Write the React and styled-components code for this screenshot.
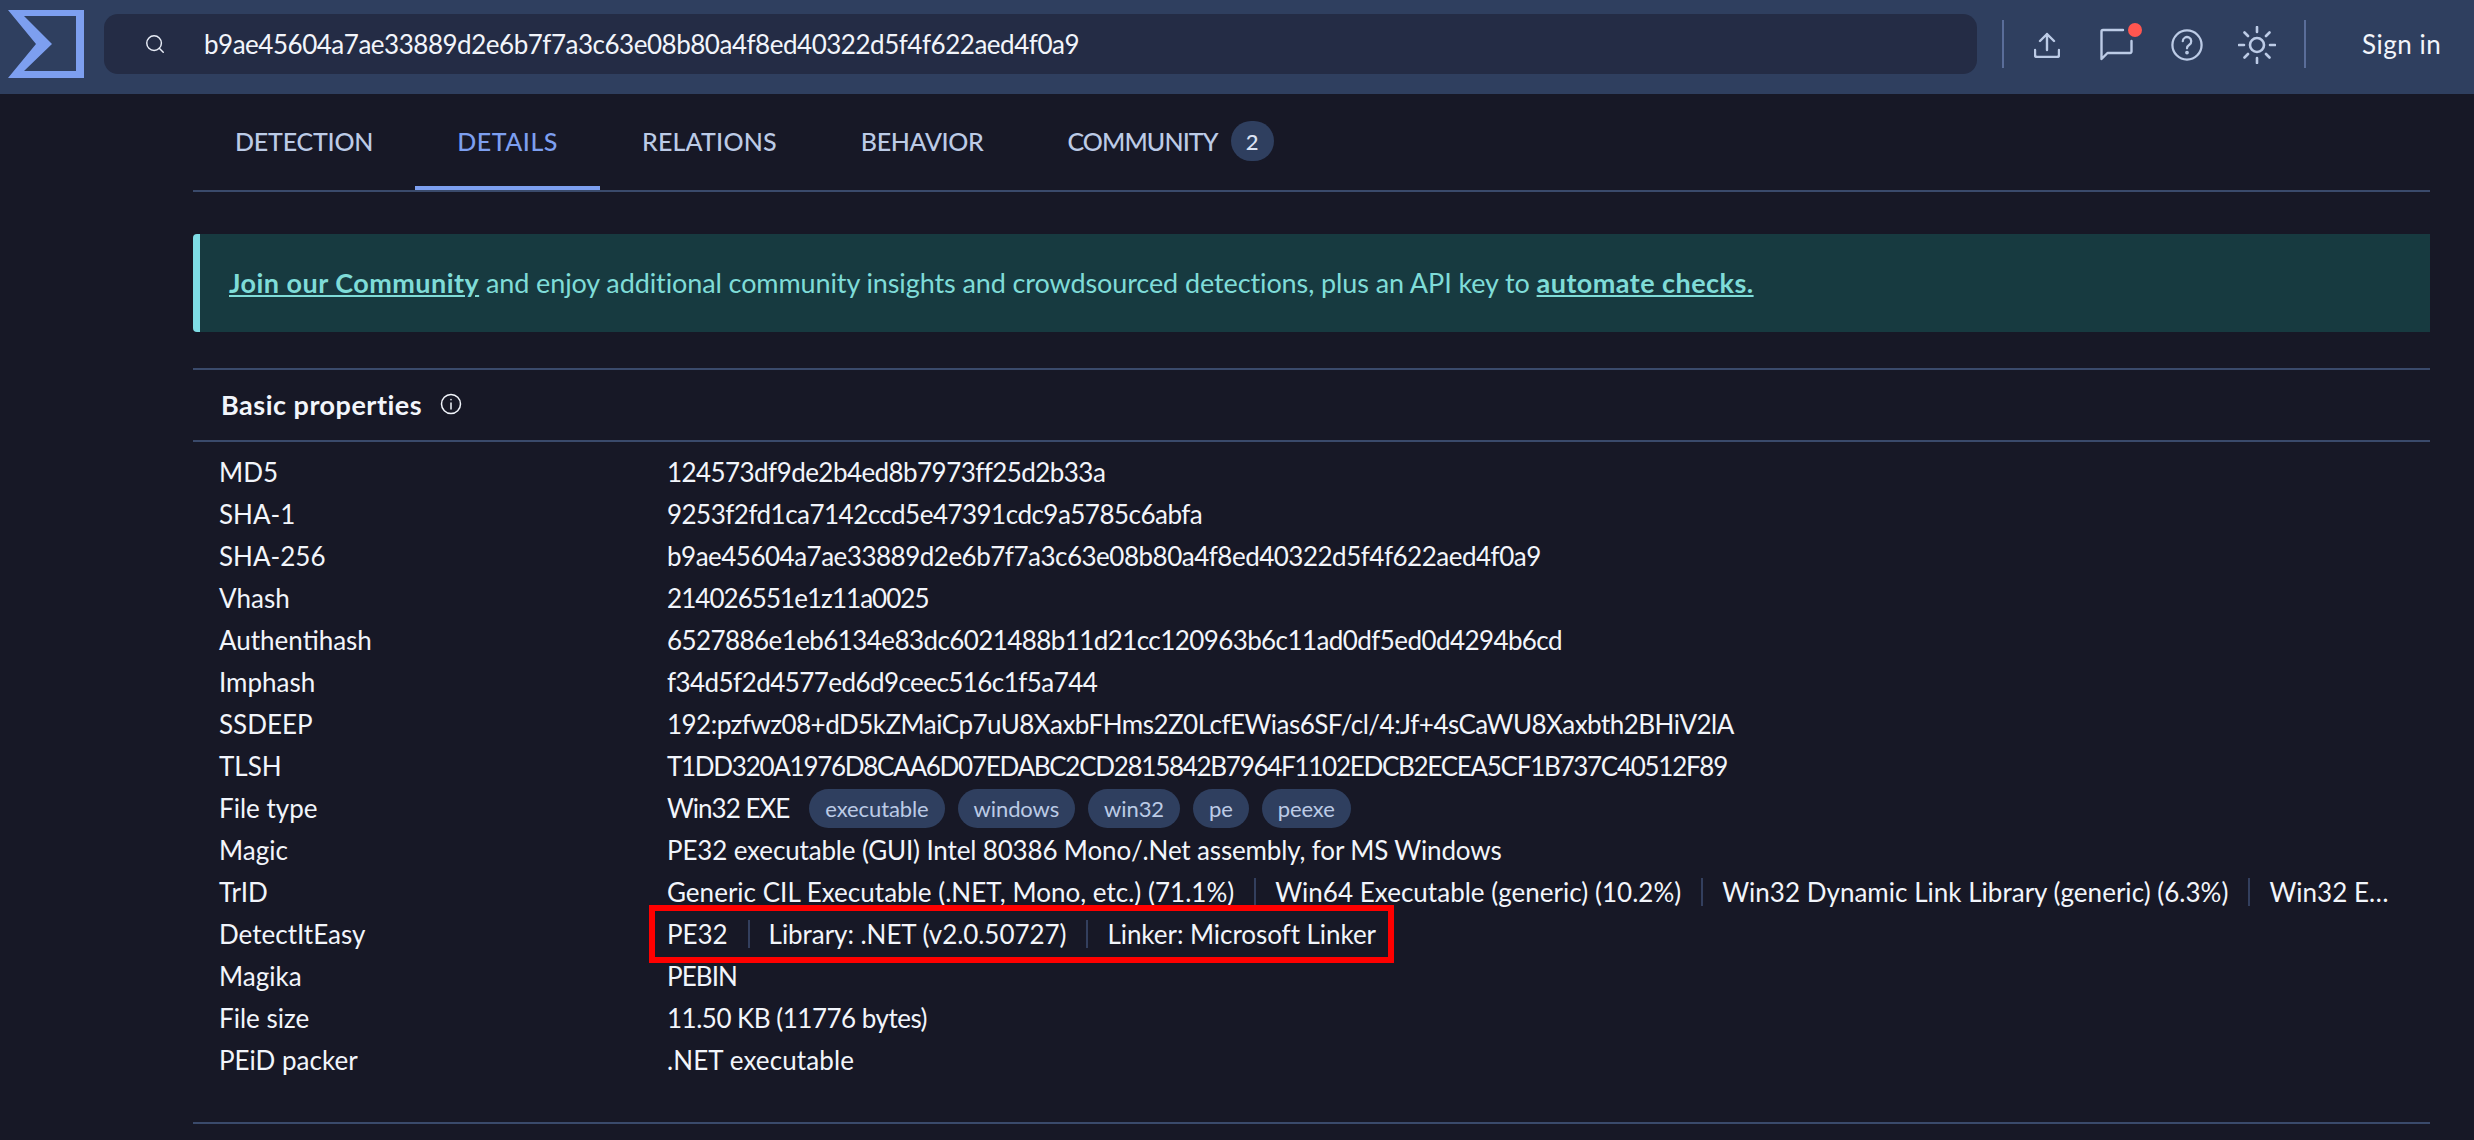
import styled, { createGlobalStyle } from "styled-components"
import { Fragment } from "react"
import { Search } from "lucide-react"

const GlobalStyle = createGlobalStyle`
    html, body {
        margin: 0;
        background: #171826;
    }

    body {
        font-family: "Lato", "Noto Sans", sans-serif;
        color: #f2f5fb;
    }
`

// spacing evens out the width of each text, the original font is narrower
const rows = [
    { label: "MD5", spacing: -0.56, items: ["124573df9de2b4ed8b7973ff25d2b33a"] },
    { label: "SHA-1", spacing: -0.52, items: ["9253f2fd1ca7142ccd5e47391cdc9a5785c6abfa"] },
    { label: "SHA-256", spacing: -0.5, items: ["b9ae45604a7ae33889d2e6b7f7a3c63e08b80a4f8ed40322d5f4f622aed4f0a9"] },
    { label: "Vhash", spacing: -0.95, items: ["214026551e1z11a0025"] },
    { label: "Authentihash", spacing: -0.58, items: ["6527886e1eb6134e83dc6021488b11d21cc120963b6c11ad0df5ed0d4294b6cd"] },
    { label: "Imphash", spacing: -0.56, items: ["f34d5f2d4577ed6d9ceec516c1f5a744"] },
    { label: "SSDEEP", spacing: -0.52, items: ["192:pzfwz08+dD5kZMaiCp7uU8XaxbFHms2Z0LcfEWias6SF/cl/4:Jf+4sCaWU8Xaxbth2BHiV2lA"] },
    { label: "TLSH", spacing: -1.28, items: ["T1DD320A1976D8CAA6D07EDABC2CD2815842B7964F1102EDCB2ECEA5CF1B737C40512F89"] },
    { label: "File type", spacing: -1, items: ["Win32 EXE"], chips: ["executable", "windows", "win32", "pe", "peexe"] },
    { label: "Magic", spacing: -0.15, items: ["PE32 executable (GUI) Intel 80386 Mono/.Net assembly, for MS Windows"] },
    {
        label: "TrID",
        spacing: 0.02,
        items: [
            "Generic CIL Executable (.NET, Mono, etc.) (71.1%)",
            "Win64 Executable (generic) (10.2%)",
            "Win32 Dynamic Link Library (generic) (6.3%)",
            "Win32 Executable (generic) (4.3%)",
        ],
    },
    { label: "DetectItEasy", spacing: -0.05, items: ["PE32", "Library: .NET (v2.0.50727)", "Linker: Microsoft Linker"], marked: true },
    { label: "Magika", spacing: -0.9, items: ["PEBIN"] },
    { label: "File size", spacing: -0.5, items: ["11.50 KB (11776 bytes)"] },
    { label: "PEiD packer", spacing: 0.1, items: [".NET executable"] },
]

const tabs = [
    { name: "DETECTION", spacing: -0.2 },
    { name: "DETAILS", spacing: 0.5, active: true },
    { name: "RELATIONS", spacing: 0.2 },
    { name: "BEHAVIOR", spacing: -0.35 },
    { name: "COMMUNITY", spacing: -0.9, count: 2 },
]

function Logo() {
    return (
        <LogoSvg width="76" height="68" viewBox="0 0 76 68">
            <path
                fillRule="evenodd"
                fill="#7d9ff0"
                d="M0 0H76V68H0L28 34ZM16 6H68V61H16L44 34Z"
            />
        </LogoSvg>
    )
}

function ToolIcons() {
    return (
        <Tools>
            <svg width="26" height="26" viewBox="0 0 26 26" fill="none" stroke="#bccbe6" strokeWidth="2.4" strokeLinecap="round" strokeLinejoin="round">
                <path d="M13 18V2M6 9l7-7 7 7M1 18v5a2 2 0 0 0 2 2h20a2 2 0 0 0 2-2v-5" />
            </svg>
            <ChatIcon>
                <svg width="33" height="33" viewBox="0 0 33 33" fill="none" stroke="#bccbe6" strokeWidth="2.4" strokeLinejoin="round" strokeLinecap="round">
                    <path d="M23 2H3a1.500 1.500 0 0 0-1.500 1.500V31l6-6H30a1.500 1.500 0 0 0 1.500-1.500V13" />
                </svg>
                <Dot />
            </ChatIcon>
            <HelpIcon width="32" height="32" viewBox="0 0 34 34" fill="none" stroke="#bccbe6" strokeWidth="2.4" strokeLinecap="round">
                <circle cx="17" cy="17" r="15.500" />
                <path d="M12.500 13a4.500 4.500 0 1 1 7 3.800c-1.500 1-2.500 1.800-2.500 3.700" />
                <circle cx="17" cy="25" r="0.800" fill="#bccbe6" />
            </HelpIcon>
            <svg width="38" height="38" viewBox="0 0 38 38" fill="none" stroke="#bccbe6" strokeWidth="2.6" strokeLinecap="round">
                <circle cx="19" cy="19" r="7" />
                <path d="M19 1v5M19 32v5M1 19h5M32 19h5M6.500 6.500l3.500 3.500M28 28l3.500 3.500M6.500 31.500l3.500-3.500M28 10l3.500-3.500" />
            </svg>
        </Tools>
    )
}

function Values({ items }) {
    return items.map((item, i) => (
        <Fragment key={item}>
            {i > 0 && <Separator />}
            <ValueItem $shrink={i === 3}>{item}</ValueItem>
        </Fragment>
    ))
}

export default function App() {
    return (
        <Page>
            <GlobalStyle />
            <Header>
                <Logo />
                <SearchBox>
                    <Search size={22} color="#e8edf7" strokeWidth={1.6} />
                    <SearchText>b9ae45604a7ae33889d2e6b7f7a3c63e08b80a4f8ed40322d5f4f622aed4f0a9</SearchText>
                </SearchBox>
                <VLine />
                <ToolIcons />
                <VLine />
                <SignIn>Sign in</SignIn>
            </Header>

            <Content>
                <TabBar>
                    {tabs.map((tab) => (
                        <Tab key={tab.name} $active={tab.active} $spacing={tab.spacing}>
                            {tab.name}
                            {tab.count && <Count>{tab.count}</Count>}
                        </Tab>
                    ))}
                </TabBar>

                <Banner>
                    <BannerLink>Join our Community</BannerLink>
                    &nbsp;and enjoy additional community insights and crowdsourced detections, plus an API key to&nbsp;
                    <BannerLink>automate checks.</BannerLink>
                </Banner>

                <Card>
                    <CardTitle>
                        Basic properties
                        <svg width="22" height="22" viewBox="0 0 22 22" fill="none" stroke="#f2f5fb" strokeWidth="1.500" strokeLinecap="round">
                            <circle cx="11" cy="11" r="9.500" />
                            <path d="M11 10v6M11 6.500v.2" />
                        </svg>
                    </CardTitle>
                    <Rows>
                        {rows.map((row) => (
                            <Row key={row.label}>
                                <Label>{row.label}</Label>
                                <Value $spacing={row.spacing}>
                                    {row.marked ? (
                                        <Marked><Values items={row.items} /></Marked>
                                    ) : (
                                        <Values items={row.items} />
                                    )}
                                    {row.chips && (
                                        <Chips>
                                            {row.chips.map((chip) => <Chip key={chip}>{chip}</Chip>)}
                                        </Chips>
                                    )}
                                </Value>
                            </Row>
                        ))}
                    </Rows>
                </Card>
            </Content>
        </Page>
    )
}

const Page = styled.div`
    width: 2474px;
    height: 1140px;
    overflow: hidden;
    background: #171826;
`

const Header = styled.header`
    height: 94px;
    background: #2f3f5f;
    display: flex;
    align-items: center;
    padding: 0 0 6px 8px;
    box-sizing: border-box;
`

const LogoSvg = styled.svg`
    flex: none;
`

const SearchBox = styled.div`
    width: 1873px;
    height: 60px;
    margin-left: 20px;
    margin-right: 25px;
    flex: none;
    background: #242c45;
    border-radius: 14px;
    display: flex;
    align-items: center;
    padding-left: 40px;
    box-sizing: border-box;
`

const SearchText = styled.span`
    margin-left: 38px;
    font-size: 26px;
    letter-spacing: -0.48px;
    color: #f2f5fb;
`

const VLine = styled.div`
    width: 2px;
    height: 48px;
    background: #5a6d99;
    flex: none;
`

const Tools = styled.div`
    width: 300px;
    flex: none;
    display: flex;
    align-items: center;
    margin-top: 2px;
    padding-left: 30px;
    gap: 35px;
    box-sizing: border-box;
`

const ChatIcon = styled.div`
    position: relative;
    display: flex;
    width: 33px;
    margin-left: 5px;
    margin-bottom: 2px;
`

const HelpIcon = styled.svg`
    margin-left: 3px;
`

const Dot = styled.span`
    position: absolute;
    top: -5px;
    right: -9px;
    width: 14px;
    height: 14px;
    border-radius: 50%;
    background: #ff5650;
`

const SignIn = styled.span`
    margin-left: 56px;
    font-size: 26px;
    letter-spacing: 0.5px;
    color: #f2f5fb;
`

const Content = styled.main`
    margin-left: 193px;
    width: 2237px;
`

const TabBar = styled.nav`
    height: 96px;
    border-bottom: 2px solid #3a4a6b;
    display: flex;
    align-items: stretch;
`

const Tab = styled.div`
    display: flex;
    align-items: center;
    gap: 13px;
    padding: 2px 42px 0;
    font-size: 25px;
    font-weight: 500;
    letter-spacing: ${props => props.$spacing}px;
    color: ${props => props.$active ? "#7d9ff0" : "#bccbe6"};
    border-bottom: 4px solid ${props => props.$active ? "#7d9ff0" : "transparent"};
`

const Count = styled.span`
    width: 43px;
    height: 40px;
    border-radius: 20px;
    background: #2f3f5f;
    color: #dbe3f3;
    font-size: 22px;
    letter-spacing: 0;
    display: flex;
    align-items: center;
    justify-content: center;
`

const Banner = styled.div`
    margin-top: 42px;
    height: 98px;
    box-sizing: border-box;
    background: #173a40;
    border-left: 7px solid #7fdde6;
    border-radius: 4px 0 0 4px;
    display: flex;
    align-items: center;
    padding-left: 29px;
    padding-bottom: 2px;
    font-size: 27px;
    letter-spacing: -0.1px;
    color: #7fdcd8;
    white-space: pre;
`

const BannerLink = styled.a`
    font-weight: 700;
    text-decoration: underline;
    letter-spacing: 0.45px;
`

const Card = styled.section`
    margin-top: 36px;
    border-top: 2px solid #3a4a6b;
    border-bottom: 2px solid #3a4a6b;
    height: 752px;
`

const CardTitle = styled.h2`
    margin: 0;
    height: 72px;
    padding-left: 28px;
    padding-bottom: 2px;
    box-sizing: border-box;
    border-bottom: 2px solid #3a4a6b;
    display: flex;
    align-items: center;
    gap: 18px;
    font-size: 27px;
    font-weight: 700;
    letter-spacing: 0.5px;
    color: #f2f5fb;
`

const Rows = styled.div`
    padding: 9px 32px 0 26px;
`

const Row = styled.div`
    height: 42px;
    display: grid;
    grid-template-columns: 448px 1fr;
    grid-template-rows: 42px;
    align-items: center;
    font-size: 26px;
`

const Label = styled.div`
    color: #f2f5fb;
`

const Value = styled.div`
    display: flex;
    align-items: center;
    min-width: 0;
    white-space: nowrap;
    letter-spacing: ${props => props.$spacing}px;
`

const ValueItem = styled.span`
    flex: ${props => props.$shrink ? "0 1 auto" : "none"};
    min-width: 0;
    overflow: ${props => props.$shrink ? "hidden" : "visible"};
    text-overflow: ellipsis;
`

const Separator = styled.span`
    flex: none;
    width: 2px;
    height: 28px;
    margin: 0 19px 0 20px;
    background: #333f5e;
`

const Marked = styled.div`
    display: flex;
    align-items: center;
    height: 46px;
    margin-left: -18px;
    padding: 0 12px;
    border: 6px solid #ff0000;
`

const Chips = styled.div`
    display: flex;
    gap: 13px;
    margin-left: 20px;
`

const Chip = styled.span`
    height: 39px;
    padding: 0 16px;
    border-radius: 20px;
    background: #2f3f5f;
    color: #bccbe6;
    font-size: 22px;
    letter-spacing: -0.1px;
    display: flex;
    align-items: center;
`
